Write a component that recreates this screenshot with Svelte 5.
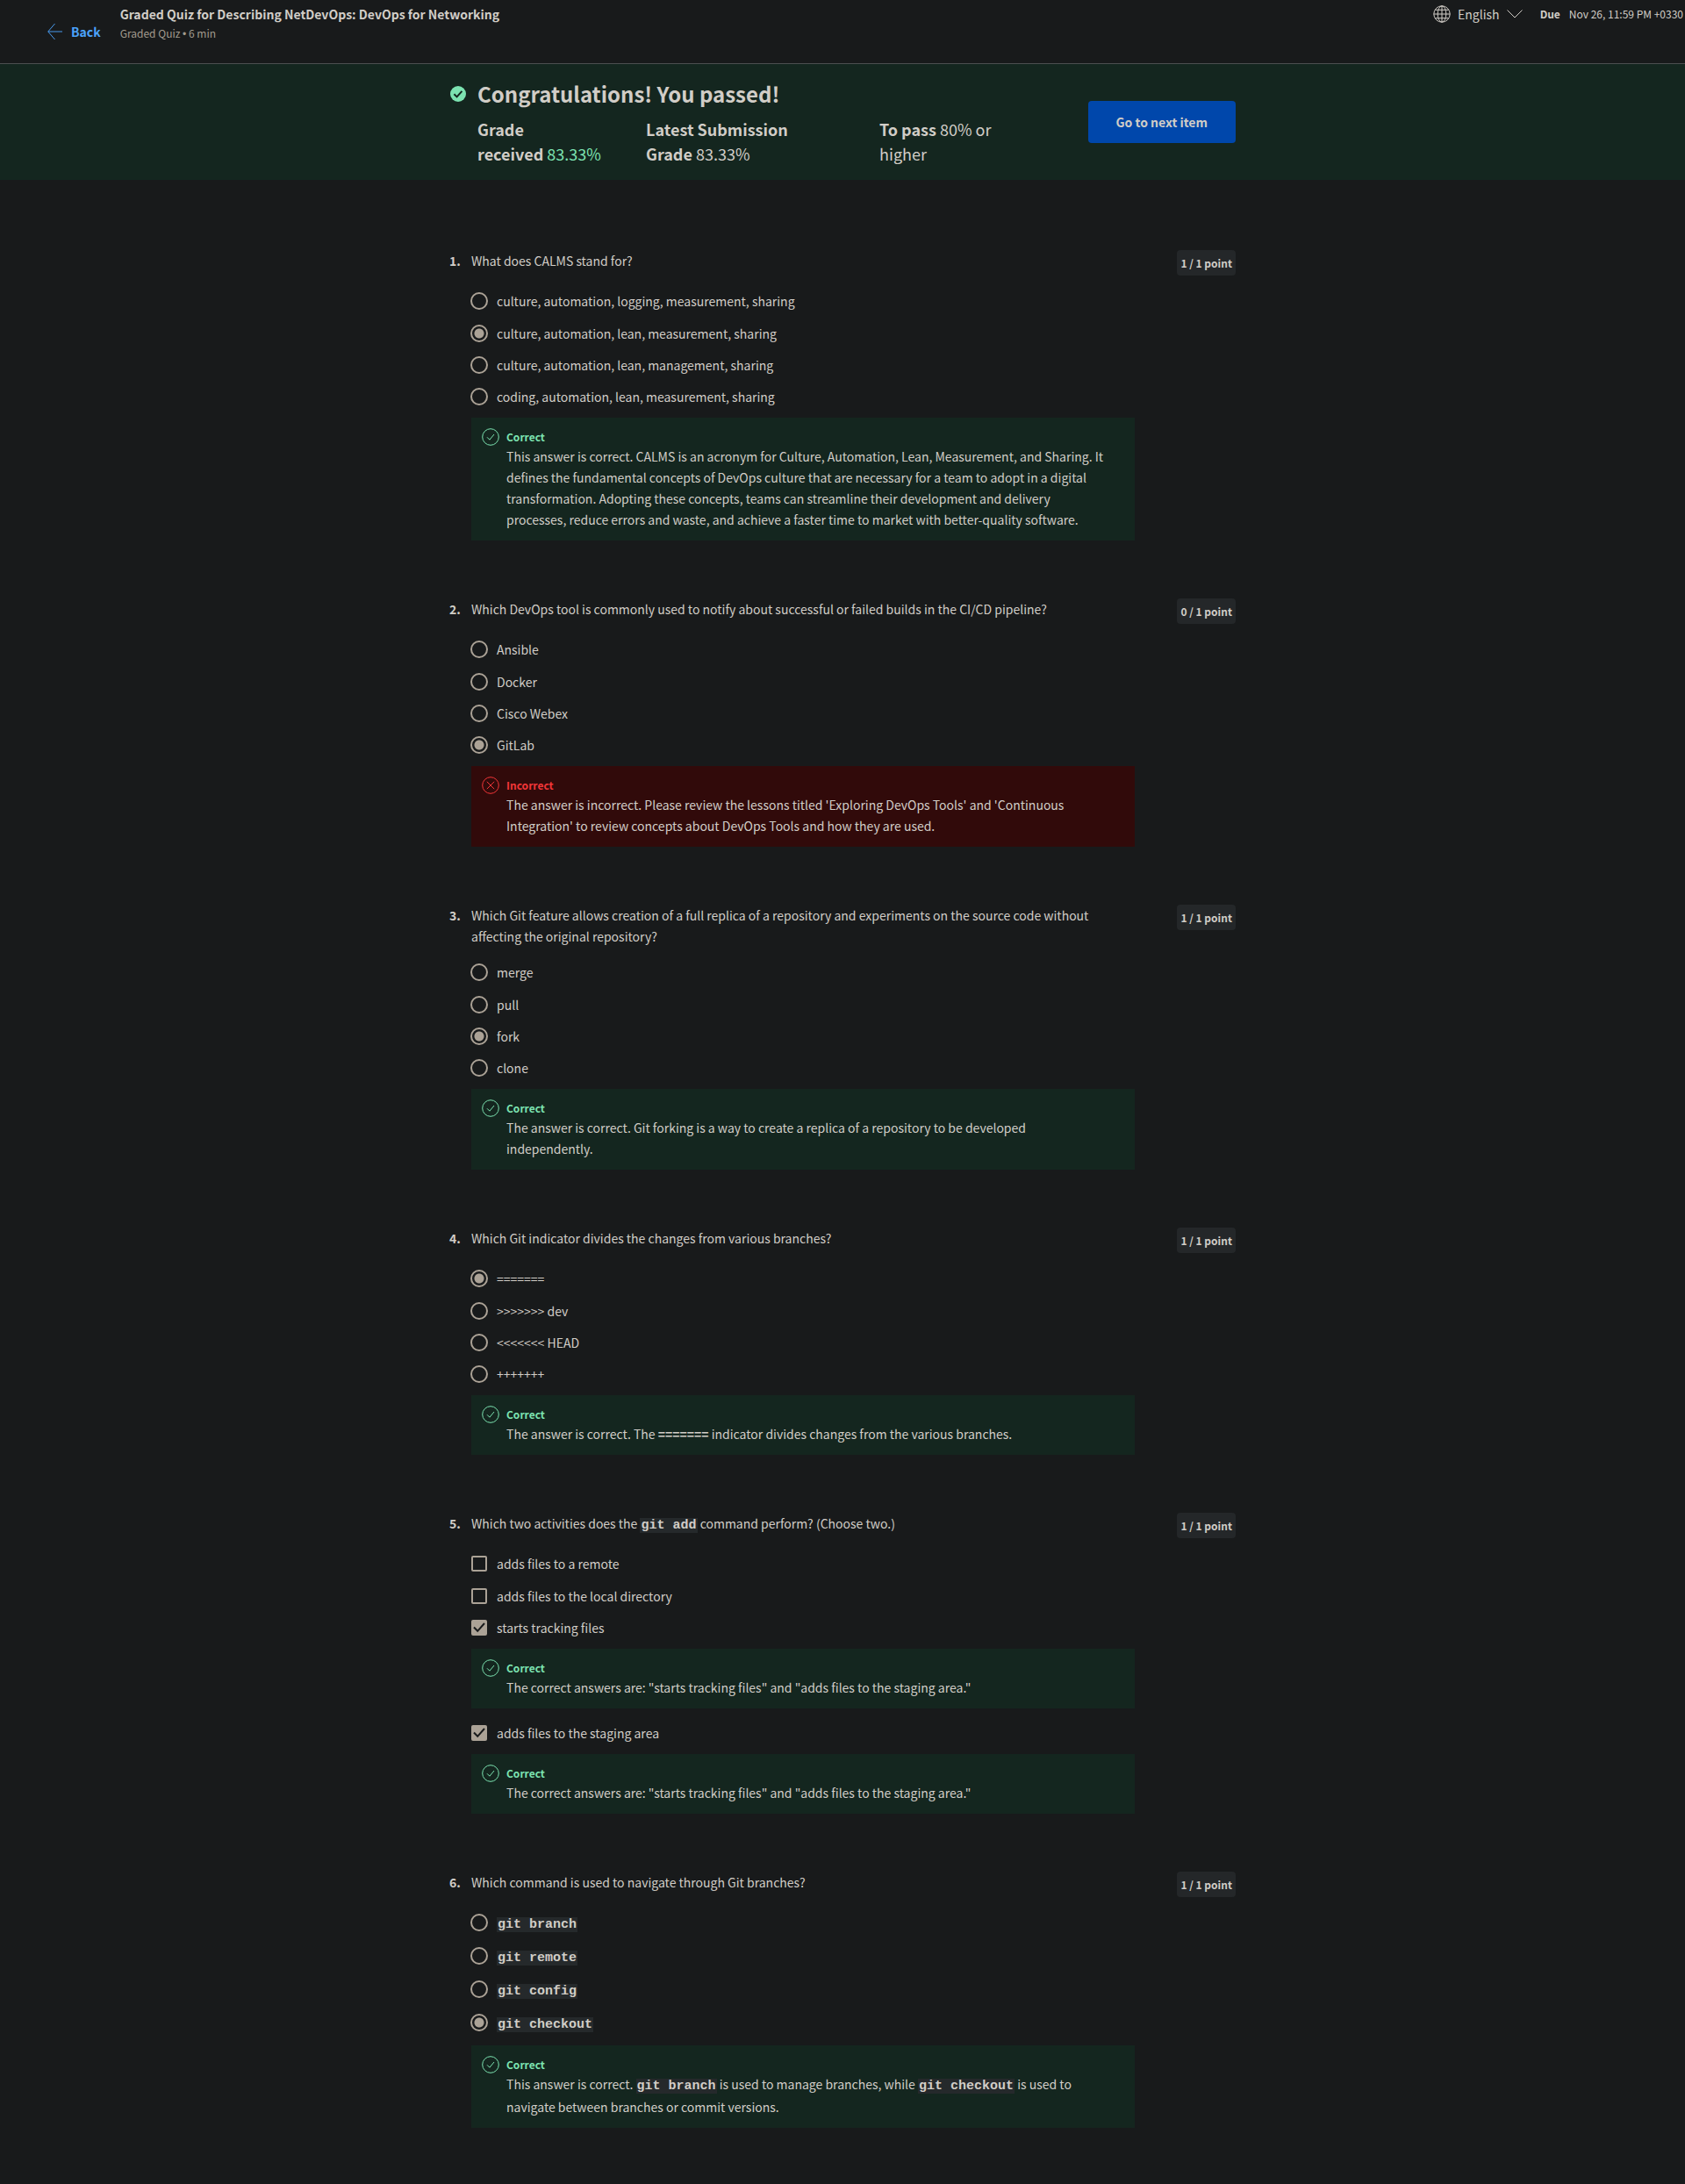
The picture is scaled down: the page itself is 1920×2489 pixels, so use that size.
<script>
  const t = (text) => ({ text });
  const c = (text) => ({ code: text });

  const questions = [
    {
      prompt: [t('What does CALMS stand for?')],
      score: '1 / 1 point',
      type: 'radio',
      options: [
        { label: [t('culture, automation, logging, measurement, sharing')] },
        { label: [t('culture, automation, lean, measurement, sharing')], checked: true },
        { label: [t('culture, automation, lean, management, sharing')] },
        {
          label: [t('coding, automation, lean, measurement, sharing')],
          feedback: {
            ok: true,
            body: [t('This answer is correct. CALMS is an acronym for Culture, Automation, Lean, Measurement, and Sharing. It defines the fundamental concepts of DevOps culture that are necessary for a team to adopt in a digital transformation. Adopting these concepts, teams can streamline their development and delivery processes, reduce errors and waste, and achieve a faster time to market with better-quality software.')]
          }
        }
      ]
    },
    {
      prompt: [t('Which DevOps tool is commonly used to notify about successful or failed builds in the CI/CD pipeline?')],
      score: '0 / 1 point',
      type: 'radio',
      options: [
        { label: [t('Ansible')] },
        { label: [t('Docker')] },
        { label: [t('Cisco Webex')] },
        {
          label: [t('GitLab')],
          checked: true,
          feedback: {
            ok: false,
            body: [t("The answer is incorrect. Please review the lessons titled 'Exploring DevOps Tools' and 'Continuous Integration' to review concepts about DevOps Tools and how they are used.")]
          }
        }
      ]
    },
    {
      prompt: [t('Which Git feature allows creation of a full replica of a repository and experiments on the source code without affecting the original repository?')],
      score: '1 / 1 point',
      type: 'radio',
      options: [
        { label: [t('merge')] },
        { label: [t('pull')] },
        { label: [t('fork')], checked: true },
        {
          label: [t('clone')],
          feedback: {
            ok: true,
            body: [t('The answer is correct. Git forking is a way to create a replica of a repository to be developed independently.')]
          }
        }
      ]
    },
    {
      prompt: [t('Which Git indicator divides the changes from various branches?')],
      score: '1 / 1 point',
      type: 'radio',
      options: [
        { label: [t('=======')], checked: true },
        { label: [t('>>>>>>> dev')] },
        { label: [t('<<<<<<< HEAD')] },
        {
          label: [t('+++++++')],
          feedback: {
            ok: true,
            body: [
              t('The answer is correct. The '),
              { strong: '=======' },
              t(' indicator divides changes from the various branches.')
            ]
          }
        }
      ]
    },
    {
      prompt: [t('Which two activities does the '), c('git add'), t(' command perform? (Choose two.)')],
      score: '1 / 1 point',
      type: 'checkbox',
      options: [
        { label: [t('adds files to a remote')] },
        { label: [t('adds files to the local directory')] },
        {
          label: [t('starts tracking files')],
          checked: true,
          feedback: {
            ok: true,
            body: [t('The correct answers are: "starts tracking files" and "adds files to the staging area."')]
          }
        },
        {
          label: [t('adds files to the staging area')],
          checked: true,
          feedback: {
            ok: true,
            body: [t('The correct answers are: "starts tracking files" and "adds files to the staging area."')]
          }
        }
      ]
    },
    {
      prompt: [t('Which command is used to navigate through Git branches?')],
      score: '1 / 1 point',
      type: 'radio',
      options: [
        { label: [c('git branch')] },
        { label: [c('git remote')] },
        { label: [c('git config')] },
        {
          label: [c('git checkout')],
          checked: true,
          feedback: {
            ok: true,
            body: [
              t('This answer is correct. '),
              c('git branch'),
              t(' is used to manage branches, while '),
              c('git checkout'),
              t(' is used to navigate between branches or commit versions.')
            ]
          }
        }
      ]
    }
  ];
</script>

{#snippet rich(parts)}{#each parts as part}{#if part.code}<code>{part.code}</code>{:else if part.strong}<strong>{part.strong}</strong>{:else}{part.text}{/if}{/each}{/snippet}

{#snippet feedback(item)}
  <div class="feedback" class:wrong={!item.ok}>
    <svg class="mark" viewBox="0 0 20 20" aria-hidden="true">
      <circle cx="10" cy="10" r="9.3" />
      {#if item.ok}
        <path d="M6 10.3 8.9 13.2 14 7" />
      {:else}
        <path d="M5.8 5.8 14.2 14.2M14.2 5.8 5.8 14.2" />
      {/if}
    </svg>
    <div>
      <h3>{item.ok ? 'Correct' : 'Incorrect'}</h3>
      <p>{@render rich(item.body)}</p>
    </div>
  </div>
{/snippet}

<div class="page">
  <header>
    <a class="back" href="#back">
      <svg viewBox="0 0 18 20" aria-hidden="true"><path d="M18 10H1M9 .5 .8 10 9 19.5" /></svg>
      Back
    </a>
    <div class="heading">
      <h2>Graded Quiz for Describing NetDevOps: DevOps for Networking</h2>
      <p>Graded Quiz <span class="dot">•</span> 6 min</p>
    </div>
    <button class="language" type="button">
      <svg class="globe" viewBox="0 0 20 20" aria-hidden="true">
        <circle cx="10" cy="10" r="9.2" />
        <ellipse cx="10" cy="10" rx="4.8" ry="9.2" />
        <path d="M10 .8V19.2M.8 10H19.2M2.3 5.3H17.7M2.3 14.7H17.7" />
      </svg>
      English
      <svg class="chevron" viewBox="0 0 18 10" aria-hidden="true"><path d="M.5 .5 9 9 17.5 .5" /></svg>
    </button>
    <p class="due"><strong>Due</strong><span>Nov 26, 11:59 PM +0330</span></p>
  </header>

  <section class="banner">
    <div class="column result">
      <svg class="passed" viewBox="0 0 18 18" aria-hidden="true">
        <circle cx="9" cy="9" r="9" />
        <path d="M4.4 9.2 7.6 12.4 13.4 5.8" />
      </svg>
      <div class="summary">
        <h1>Congratulations! You passed!</h1>
        <div class="grades">
          <p><strong>Grade received</strong>&nbsp;<span class="good">83.33%</span></p>
          <p><strong>Latest Submission Grade</strong> 83.33%</p>
          <p><strong>To pass</strong> 80% or higher</p>
        </div>
      </div>
      <button class="next" type="button">Go to next item</button>
    </div>
  </section>

  <main class="column">
    {#each questions as question, q}
      <section class="question">
        <div class="number">{q + 1}.</div>
        <div class="content">
          <div class="prompt" id="prompt-{q}">{@render rich(question.prompt)}</div>
          <div class="options" role="group" aria-labelledby="prompt-{q}">
            {#each question.options as option}
              <label class="option">
                <input type={question.type} name="question-{q}" checked={option.checked} />
                <span>{@render rich(option.label)}</span>
              </label>
              {#if option.feedback}
                {@render feedback(option.feedback)}
              {/if}
            {/each}
          </div>
        </div>
        <div class="score">{question.score}</div>
      </section>
    {/each}
  </main>
</div>

<style>
  :global(body) {
    background: #181a1b;
  }

  .page {
    color: #d1cdc7;
    font: 14px/24px 'Noto Sans CJK SC', 'Noto Sans', sans-serif;
  }

  h1,
  h2,
  h3,
  p {
    margin: 0;
  }

  svg {
    flex: none;
    fill: none;
    stroke: currentColor;
  }

  button {
    border: 0;
    color: inherit;
    font: inherit;
    cursor: pointer;
  }

  .column {
    box-sizing: border-box;
    max-width: 896px;
    margin: 0 auto;
  }

  header {
    display: flex;
    align-items: flex-start;
    height: 72px;
    padding: 0 2px 0 54px;
    border-bottom: 1px solid #4b4f50;
  }

  .back {
    display: flex;
    align-items: center;
    gap: 10px;
    margin: 24px 22px 0 0;
    color: #4ba3fb;
    font-weight: 700;
    text-decoration: none;
  }

  .back svg {
    width: 17px;
    height: 20px;
  }

  .heading {
    flex: 1;
    padding-top: 6px;
  }

  h2 {
    font-size: 14px;
    line-height: 20px;
    font-weight: 700;
  }

  .heading p {
    color: #a29a8e;
    font-size: 12px;
  }

  .dot {
    font-family: 'Liberation Sans', sans-serif;
  }

  .language {
    display: flex;
    align-items: center;
    gap: 8px;
    padding: 4px 0;
    background: none;
  }

  .globe {
    width: 20px;
    height: 20px;
  }

  .chevron {
    width: 18px;
    height: 10px;
  }

  .due {
    display: flex;
    gap: 10px;
    margin-left: 20px;
    padding-top: 4px;
    font-size: 12px;
    white-space: nowrap;
  }

  .banner {
    background: #14261f;
  }

  .result {
    display: flex;
    align-items: center;
    padding: 14px 0 16px;
  }

  .passed {
    align-self: flex-start;
    width: 18px;
    height: 18px;
    margin: 11px 13px 0 1px;
    fill: #7ce3b1;
    stroke: none;
  }

  .passed path {
    fill: none;
    stroke: #14261f;
    stroke-width: 2;
  }

  .summary {
    flex: 1;
  }

  h1 {
    margin-bottom: 6px;
    font-size: 24px;
    line-height: 40px;
    font-weight: 700;
  }

  .grades {
    display: grid;
    grid-template-columns: 192px 266px 1fr;
    font-size: 18px;
    line-height: 28px;
  }

  .grades p {
    padding-right: 72px;
  }

  .grades p:first-child {
    padding-right: 48px;
  }

  .good {
    color: #7ce3b1;
  }

  .next {
    margin-top: 2px;
    padding: 12px 32px;
    border-radius: 4px;
    background: #0047ab;
    font-weight: 700;
  }

  main {
    padding-top: 80px;
  }

  .question {
    display: flex;
    align-items: flex-start;
    margin-bottom: 66px;
  }

  .number {
    flex: none;
    width: 25px;
    font-weight: 700;
  }

  .content {
    flex: 1;
    max-width: 756px;
  }

  .prompt {
    box-sizing: border-box;
    min-height: 30px;
    padding-bottom: 1px;
  }

  .options {
    padding-top: 10px;
  }

  .option {
    display: flex;
    align-items: flex-start;
    gap: 10px;
    margin-left: -1px;
    padding: 6px 0;
  }

  .option:first-child {
    box-sizing: border-box;
    min-height: 37px;
  }

  input {
    appearance: none;
    flex: none;
    box-sizing: border-box;
    width: 20px;
    height: 20px;
    margin: 2px 0 0;
    border: 2px solid #aba296;
    border-radius: 50%;
  }

  input:checked {
    background: radial-gradient(circle, #aba296 5px, transparent 6px);
  }

  input[type='checkbox'] {
    width: 18px;
    height: 18px;
    margin: 3px 1px 0;
    border-radius: 2px;
  }

  input[type='checkbox']:checked {
    background: #aba296
      url("data:image/svg+xml,%3Csvg xmlns='http://www.w3.org/2000/svg' viewBox='0 0 18 18'%3E%3Cpath d='M3 8.5 7.2 12.8 15 4' fill='none' stroke='%23181a1b' stroke-width='2'/%3E%3C/svg%3E")
      center / 18px no-repeat;
  }

  .feedback {
    display: flex;
    gap: 8px;
    margin: 6px 0 10px;
    padding: 12px 28px 12px 12px;
    background: #14261f;
  }

  .feedback:last-child {
    margin-bottom: 0;
  }

  .mark {
    width: 20px;
    height: 20px;
    color: #7ce3b1;
  }

  h3 {
    color: #7ce3b1;
    font-size: 12px;
    line-height: 20px;
    font-weight: 700;
  }

  .wrong {
    background: #310a0a;
  }

  .wrong .mark,
  .wrong h3 {
    color: #f23638;
  }

  .score {
    margin-left: auto;
    padding: 4px;
    border-radius: 4px;
    background: #242729;
    font-size: 12px;
    line-height: 21px;
    font-weight: 700;
    white-space: nowrap;
  }

  code {
    padding: 0 1px;
    background: #25292b;
    font: 700 15px/22px 'Courier New', 'Liberation Mono', monospace;
  }
</style>
